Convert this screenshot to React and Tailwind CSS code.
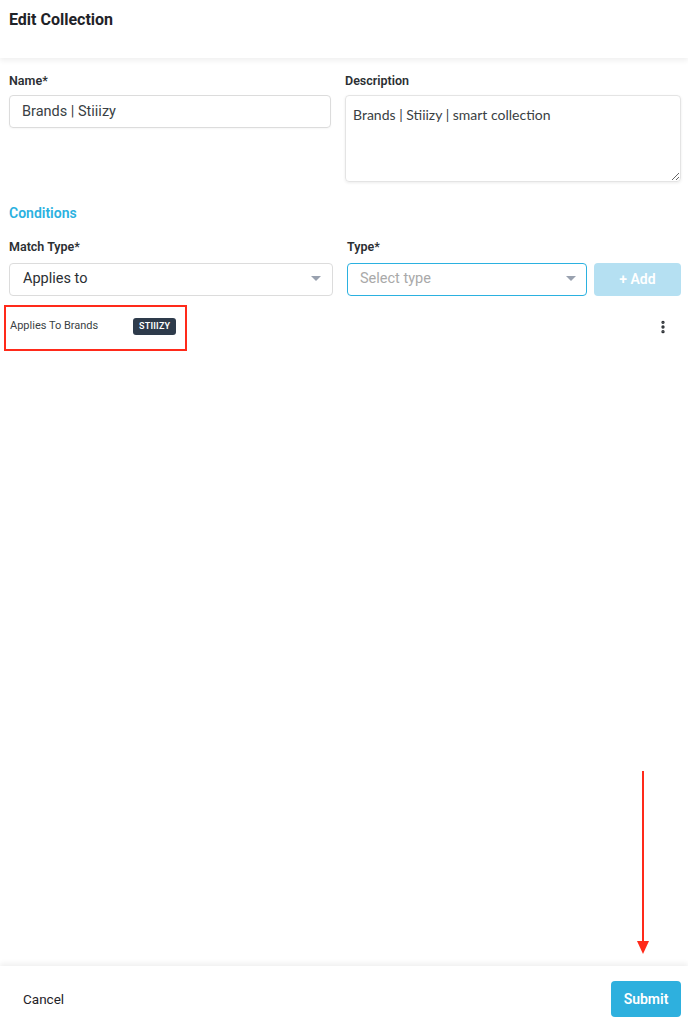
import { MoreVertical } from 'lucide-react';

const Caret = () => (
  <svg width="10" height="6" viewBox="0 0 10 6" className="text-gray-400">
    <path d="M0 0h10L5 5z" fill="currentColor" />
  </svg>
);

const App = () => {
  return (
    <div className="relative flex h-screen flex-col bg-white font-['Roboto',sans-serif] text-gray-800">
      {/* Header */}
      <header className="h-[58px] shrink-0 px-[9px] pt-[8px] shadow-[0_3px_5px_rgba(0,0,0,0.06)]">
        <h1 className="text-[16px] font-bold text-[#1f2328]">Edit Collection</h1>
      </header>

      {/* Body */}
      <main className="flex-1 pl-[9px] pr-[7px] pt-[14px]">
        <div className="grid grid-cols-[322px_336px] gap-x-[14px]">
          <div>
            <label className="block text-[12.5px] font-semibold text-[#2b2f33]">Name*</label>
            <input
              className="mt-[4px] h-[33px] w-full rounded border border-[#dcdcdc] px-[12px] text-[14.5px] text-[#3a3f44] shadow-[0_1px_2px_rgba(0,0,0,0.04)] outline-none"
              defaultValue="Brands | Stiiizy"
            />
          </div>
          <div>
            <label className="block text-[12.5px] font-semibold text-[#2b2f33]">Description</label>
            <textarea
              className="mt-[4px] h-[87px] w-full rounded border border-[#e4e4e4] px-[7px] py-[8px] font-['Lato',sans-serif] text-[14px] text-[#3a3f44] shadow-[0_1px_3px_rgba(0,0,0,0.08)] outline-none"
              defaultValue="Brands | Stiiizy | smart collection"
            />
          </div>
        </div>

        <h2 className="mt-[14px] text-[14px] font-semibold text-[#2bb1e0]">Conditions</h2>

        <div className="mt-[14px] flex items-end">
          <div className="w-[324px] shrink-0">
            <label className="block text-[12.5px] font-semibold text-[#2b2f33]">Match Type*</label>
            <div className="mt-[6px] flex h-[33px] items-center justify-between rounded border border-[#dcdcdc] pl-[13px] pr-[11px] text-[14.5px] text-[#2b2f33]">
              <span>Applies to</span>
              <Caret />
            </div>
          </div>
          <div className="ml-[14px] w-[240px] shrink-0">
            <label className="block text-[12.5px] font-semibold text-[#2b2f33]">Type*</label>
            <div className="mt-[6px] flex h-[33px] items-center justify-between rounded border border-[#2bb1e0] pl-[12px] pr-[10px] text-[14.5px] text-[#a9a9a9]">
              <span>Select type</span>
              <Caret />
            </div>
          </div>
          <button className="ml-[7px] h-[33px] w-[87px] shrink-0 rounded bg-[#b5e0f2] text-[14px] font-semibold text-white">
            + Add
          </button>
        </div>

        {/* Condition row */}
        <div className="relative mt-[9px] flex h-[46px] items-center justify-between pb-[2px] pl-[1px] pr-[10px]">
          <div className="flex items-center">
            <span className="w-[123px] text-[11px] text-[#3a3f44]">Applies To Brands</span>
            <span className="rounded-[3px] bg-[#2e3b4b] px-[6px] py-[2px] text-[9px] font-semibold tracking-wide text-white">
              STIIIZY
            </span>
          </div>
          <MoreVertical size={16} strokeWidth={3} className="text-[#2b2f33]" />
          <div className="pointer-events-none absolute left-[-5px] top-0 h-[46px] w-[183px] border-2 border-[#ff2a1a]" />
        </div>
      </main>

      {/* Footer */}
      <footer className="flex h-[55px] shrink-0 items-start justify-between pl-[23px] pr-[7px] pt-[15px] shadow-[0_-3px_5px_rgba(0,0,0,0.06)]">
        <button className="mt-[8px] text-[13.5px] font-normal text-[#1f2328]">Cancel</button>
        <button className="h-[36px] w-[70px] rounded bg-[#2eb0de] text-[14px] font-semibold text-white">
          Submit
        </button>
      </footer>

      {/* annotation arrow */}
      <svg className="pointer-events-none absolute left-[636px] top-[771px]" width="14" height="184" viewBox="0 0 14 184">
        <line x1="7" y1="0" x2="7" y2="170" stroke="#ff2a1a" strokeWidth="2" />
        <path d="M1 170h12L7 183z" fill="#ff2a1a" />
      </svg>
    </div>
  );
};

export default App;
